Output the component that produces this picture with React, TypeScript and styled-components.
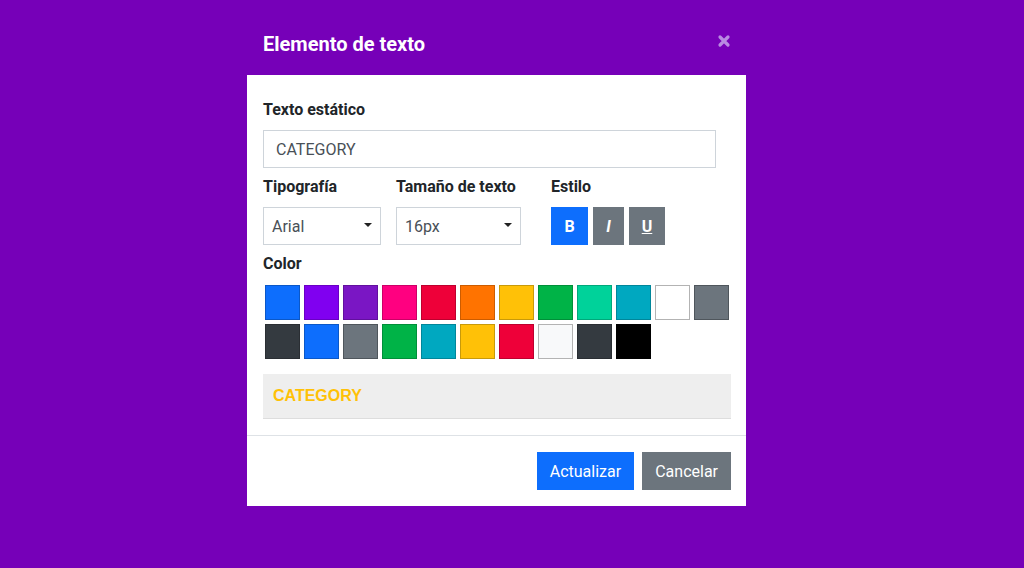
import React from "react";
import styled, { createGlobalStyle } from "styled-components";

const Global = createGlobalStyle`
  html, body { margin: 0; padding: 0; background: #7600b8; }
  body { font-family: Roboto, "Liberation Sans", Arial, sans-serif; width: 1024px; height: 568px; overflow: hidden; }
  * { box-sizing: border-box; }
`;

const Page = styled.div`
  display: flex;
  padding-left: 247px;
`;

const Modal = styled.div`
  width: 499px;
  display: flex;
  flex-direction: column;
`;

const Header = styled.div`
  height: 75px;
  padding: 28px 16px 0 16px;
  display: flex;
  align-items: flex-start;
  justify-content: space-between;
`;

const Title = styled.h1`
  margin: 0;
  font-size: 20px;
  line-height: 32px;
  font-weight: 700;
  color: #ffffff;
`;

const Close = styled.button`
  border: 0;
  background: none;
  padding: 0;
  margin: 6px -1px 0 0;
  width: 14px;
  height: 14px;
  display: flex;
  cursor: pointer;
`;

const Panel = styled.div`
  background: #ffffff;
  display: flex;
  flex-direction: column;
`;

const Body = styled.div`
  padding: 24px 15px 16px 16px;
  display: flex;
  flex-direction: column;
`;

const Label = styled.div<{ $mt?: number; $mb?: number }>`
  font-size: 16px;
  line-height: 22px;
  font-weight: 700;
  color: #212529;
  margin-top: ${(p) => p.$mt ?? 0}px;
  margin-bottom: ${(p) => p.$mb ?? 0}px;
`;

const TextInput = styled.div`
  width: 453px;
  height: 38px;
  border: 1px solid #ced4da;
  padding: 0 12px;
  display: flex;
  align-items: center;
  font-size: 16px;
  color: #495057;
`;

const Row = styled.div`
  display: flex;
  margin-top: 8px;
`;

const Col = styled.div<{ $w?: number }>`
  width: ${(p) => (p.$w ? `${p.$w}px` : "auto")};
  display: flex;
  flex-direction: column;
`;

const Select = styled.div<{ $w: number }>`
  width: ${(p) => p.$w}px;
  height: 38px;
  border: 1px solid #ced4da;
  padding: 0 8px;
  display: flex;
  align-items: center;
  justify-content: space-between;
  font-size: 16px;
  color: #495057;
`;

const Caret = styled.span`
  width: 0;
  height: 0;
  border-left: 4px solid transparent;
  border-right: 4px solid transparent;
  border-top: 4px solid #222;
  margin-top: -3px;
`;

const StyleGroup = styled.div`
  display: flex;
  gap: 5px;
`;

const StyleBtn = styled.button<{ $active?: boolean; $w: number }>`
  width: ${(p) => p.$w}px;
  height: 38px;
  border: 0;
  padding: 0;
  background: ${(p) => (p.$active ? "#0d6efd" : "#6c757d")};
  color: #ffffff;
  font-family: Roboto, "Liberation Sans", Arial, sans-serif;
  font-size: 16px;
  font-weight: 700;
  display: flex;
  align-items: center;
  justify-content: center;
`;

const Swatches = styled.div`
  display: flex;
  flex-wrap: wrap;
  width: 470px;
  margin-top: 8px;
`;

const Swatch = styled.div<{ $c: string; $b: string }>`
  width: 35px;
  height: 35px;
  margin: 2px;
  background: ${(p) => p.$c};
  border: 1px solid ${(p) => p.$b};
`;

const Preview = styled.div`
  margin-top: 13px;
  height: 45px;
  background: #eeeeee;
  border-bottom: 1px solid #dddddd;
  padding: 0 10px;
  display: flex;
  align-items: center;
  font-family: "Liberation Sans", Arial, sans-serif;
  font-weight: 700;
  font-size: 16px;
  color: #ffc107;
`;

const Footer = styled.div`
  border-top: 1px solid #dee2e6;
  padding: 16px 15px 16px 16px;
  display: flex;
  justify-content: flex-end;
  gap: 8px;
`;

const ActionBtn = styled.button<{ $variant: "primary" | "secondary" }>`
  height: 38px;
  border: 0;
  padding: 0 13px;
  background: ${(p) => (p.$variant === "primary" ? "#0d6efd" : "#6c757d")};
  color: #ffffff;
  font-family: Roboto, "Liberation Sans", Arial, sans-serif;
  font-size: 16px;
`;

const swatches: [string, string][] = [
  ["#0d6efd", "#0b58c8"],
  ["#8000f0", "#6a00c4"],
  ["#7a16c4", "#62109e"],
  ["#ff0080", "#cc0066"],
  ["#ee0039", "#be002e"],
  ["#ff7300", "#cc5c00"],
  ["#ffc107", "#c89a0a"],
  ["#00b347", "#008f39"],
  ["#00d29a", "#00a87b"],
  ["#00a8c0", "#00869a"],
  ["#ffffff", "#b3b3b3"],
  ["#6c757d", "#4f565c"],
  ["#343a40", "#2a2e33"],
  ["#0d6efd", "#0b58c8"],
  ["#6c757d", "#4f565c"],
  ["#00b347", "#008f39"],
  ["#00a8c0", "#00869a"],
  ["#ffc107", "#c89a0a"],
  ["#ee0039", "#be002e"],
  ["#f8f9fa", "#b3b3b3"],
  ["#343a40", "#2a2e33"],
  ["#000000", "#000000"],
];

export default function App() {
  return (
    <>
      <Global />
      <Page>
        <Modal>
          <Header>
            <Title>Elemento de texto</Title>
            <Close aria-label="Cerrar">
              <svg width="14" height="14" viewBox="0 0 14 14">
                <path d="M3 3 L11 11 M11 3 L3 11" stroke="#b98be2" strokeWidth="3.2" strokeLinecap="round" />
              </svg>
            </Close>
          </Header>
          <Panel>
            <Body>
              <Label $mb={9}>Texto estático</Label>
              <TextInput>CATEGORY</TextInput>
              <Row>
                <Col $w={133}>
                  <Label $mb={9}>Tipografía</Label>
                  <Select $w={118}>
                    Arial
                    <Caret />
                  </Select>
                </Col>
                <Col $w={155}>
                  <Label $mb={9}>Tamaño de texto</Label>
                  <Select $w={125}>
                    16px
                    <Caret />
                  </Select>
                </Col>
                <Col>
                  <Label $mb={9}>Estilo</Label>
                  <StyleGroup>
                    <StyleBtn $active $w={37}>B</StyleBtn>
                    <StyleBtn $w={31}><i>I</i></StyleBtn>
                    <StyleBtn $w={36}><u>U</u></StyleBtn>
                  </StyleGroup>
                </Col>
              </Row>
              <Label $mt={8}>Color</Label>
              <Swatches>
                {swatches.map(([c, b], i) => (
                  <Swatch key={i} $c={c} $b={b} />
                ))}
              </Swatches>
              <Preview>CATEGORY</Preview>
            </Body>
            <Footer>
              <ActionBtn $variant="primary">Actualizar</ActionBtn>
              <ActionBtn $variant="secondary">Cancelar</ActionBtn>
            </Footer>
          </Panel>
        </Modal>
      </Page>
    </>
  );
}
